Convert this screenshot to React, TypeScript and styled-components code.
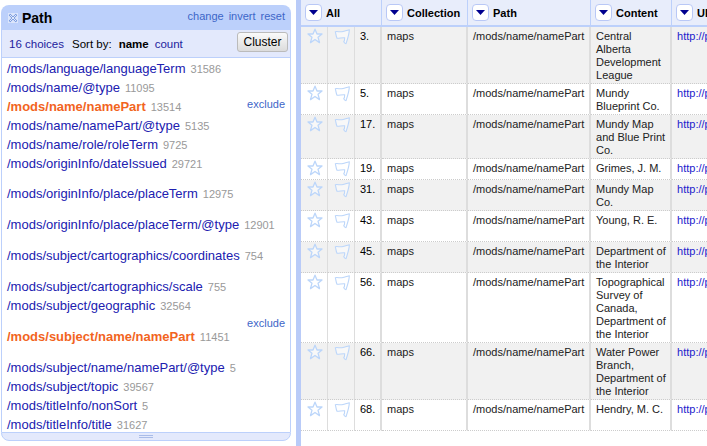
import React from "react";
import styled, { createGlobalStyle } from "styled-components";

const Global = createGlobalStyle`
  html, body { margin: 0; padding: 0; background: #fff; overflow: hidden; }
  body { font-family: "Liberation Sans", Arial, sans-serif; font-size: 12px; color: #000; }
`;

const Page = styled.div`
  display: flex;
  width: 707px;
  height: 446px;
  overflow: hidden;
`;
const Side = styled.aside`
  width: 296px;
  flex: none;
  box-sizing: border-box;
  padding: 5px 5px 5px 1px;
`;
const Panel = styled.section`
  height: 100%;
  display: flex;
  flex-direction: column;
`;
const PanelHead = styled.header`
  height: 25px;
  flex: none;
  display: flex;
  align-items: center;
  box-sizing: border-box;
  padding: 0 6px 0 7px;
  background: #bcd0fb;
  border-radius: 8px 8px 0 0;
`;
const Title = styled.span`
  font-size: 14px;
  font-weight: bold;
  margin-left: 4px;
  flex: 1;
`;
const HeadLinks = styled.div`
  display: flex;
  gap: 5px;
  margin-top: -3px;
`;
const BlueLink = styled.a`
  color: #3d66c8;
  font-size: 11px;
`;
const SubHead = styled.div`
  height: 28px;
  flex: none;
  box-sizing: border-box;
  display: flex;
  align-items: center;
  padding: 0 2px 0 7px;
  font-size: 11.5px;
  background: #e3e9fc;
  border-bottom: 1px solid #bcd0fb;
  border-left: 1px solid #bcd0fb;
  border-right: 1px solid #bcd0fb;
`;
const Choices = styled.a`
  color: #22229c;
  margin-right: 8px;
`;
const Sort = styled.span<{ $bold?: boolean; $link?: boolean }>`
  margin-right: ${(p) => (p.$bold ? 6 : 7)}px;
  font-weight: ${(p) => (p.$bold ? "bold" : "normal")};
  color: ${(p) => (p.$link ? "#22229c" : "#000")};
`;
const Cluster = styled.button`
  margin-left: auto;
  width: 51px;
  height: 20px;
  margin-top: -4px;
  padding: 0;
  font: 12px "Liberation Sans", Arial, sans-serif;
  color: #000;
  background: linear-gradient(#fafafa, #dcdcdc);
  border: 1px solid #bbb;
  border-radius: 3px;
`;
const List = styled.div`
  flex: 1;
  min-height: 0;
  overflow: hidden;
  box-sizing: border-box;
  padding: 1px 0 0 5px;
  background: #fff;
  border-left: 1px solid #bcd0fb;
  border-right: 1px solid #bcd0fb;
`;
const Item = styled.div<{ $gap?: number }>`
  position: relative;
  height: 19px;
  line-height: 19px;
  margin-top: ${(p) => p.$gap ?? 0}px;
  white-space: nowrap;
`;
const Choice = styled.a<{ $on?: boolean }>`
  font-size: 13px;
  color: ${(p) => (p.$on ? "#f2641e" : "#2020b0")};
  font-weight: ${(p) => (p.$on ? "bold" : "normal")};
`;
const Count = styled.span`
  font-size: 11px;
  color: #999;
  margin-left: 5px;
`;
const Exclude = styled.a<{ $up?: boolean }>`
  position: absolute;
  right: 5px;
  top: ${(p) => (p.$up ? -13 : -2)}px;
  font-size: 11px;
  color: #3d66c8;
`;
const Foot = styled.footer`
  height: 9px;
  flex: none;
  box-sizing: border-box;
  display: flex;
  flex-direction: column;
  align-items: center;
  gap: 1px;
  padding-top: 2px;
  background: #e3e9fc;
  border: 1px solid #bcd0fb;
  border-radius: 0 0 8px 8px;
`;
const Grip = styled.i`
  display: block;
  width: 14px;
  height: 1px;
  background: #a9bce8;
`;
const Splitter = styled.div`
  width: 5px;
  flex: none;
  background: #b9cbf8;
`;
const Main = styled.main`
  flex: 1;
  min-width: 0;
  overflow: hidden;
`;
const Table = styled.table`
  width: 570px;
  table-layout: fixed;
  border-collapse: separate;
  border-spacing: 0;
`;
const HeadCell = styled.th`
  height: 27px;
  box-sizing: border-box;
  padding: 0 0 0 4px;
  background: #e8edfb;
  border-bottom: 2px solid #bcd0fb;
  border-right: 1px solid #bcd0fb;
  text-align: left;
  font-size: 11px;
  font-weight: bold;
`;
const HeadInner = styled.div`
  display: flex;
  align-items: center;
  gap: 4px;
  white-space: nowrap;
  overflow: hidden;
`;
const Drop = styled.span`
  width: 17px;
  height: 17px;
  box-sizing: border-box;
  flex: none;
  display: flex;
  align-items: center;
  justify-content: center;
  background: #fff;
  border: 1px solid #b9c8f6;
  border-radius: 4px;
`;
const Row = styled.tr<{ $h: number; $odd: boolean }>`
  height: ${(p) => p.$h}px;
  background: ${(p) => (p.$odd ? "#f1f1f1" : "#fff")};
`;
const Cell = styled.td<{ $wide?: boolean }>`
  box-sizing: border-box;
  vertical-align: top;
  padding: 3px 4px 1px 5px;
  line-height: 13px;
  font-size: 11px;
  color: #222;
  border-bottom: 1px dotted #ccc;
  border-right: ${(p) => (p.$wide ? 2 : 1)}px solid #ddd;
`;
const IconCell = styled(Cell)`
  padding: 1px 0 0 5px;
`;
const NumCell = styled(Cell)`
  color: #000;
`;
const Url = styled.a`
  color: #2222cc;
  white-space: nowrap;
`;
const Glyph = styled.svg`
  display: block;
  overflow: visible;
`;

const XIcon = () => (
  <Glyph width="10" height="10" viewBox="0 0 10 10" aria-hidden="true">
    <rect width="10" height="10" fill="#dbe5fb" />
    <path d="M1.5 1.5L8.5 8.5M8.5 1.5L1.5 8.5" stroke="#6f93dd" strokeWidth="2" />
    <path d="M2 2L8 8M8 2L2 8" stroke="#fff" strokeWidth="0.8" />
  </Glyph>
);
const Tri = () => (
  <Glyph width="9" height="5" viewBox="0 0 9 5" aria-hidden="true">
    <path d="M0 0H9L4.5 5Z" fill="#00008f" />
  </Glyph>
);
const Star = () => (
  <Glyph width="17" height="16" viewBox="0 0 17 16" aria-hidden="true">
    <path
      d="M9 1.2L11 6H16L12 9.2L13.5 14.6L9 11.5L4.5 14.6L6 9.2L2 6H7Z"
      fill="rgba(255,255,255,.5)"
      stroke="#bcd6fa"
      strokeWidth="1.3"
      strokeLinejoin="round"
    />
  </Glyph>
);
const Flag = () => (
  <Glyph width="18" height="17" viewBox="0 0 18 17" aria-hidden="true">
    <path
      d="M2.3 3.7C5 3 7 4.5 10 3.5C12 3 14 2.2 16.3 1.7C16.3 6 14.5 11 13 15.7C12 15.5 11 14.7 10.7 13.7C11.5 13.2 11.7 11 11.7 9.7C9 9.5 6 10.5 4 10.3C3 8.5 3 6 2.3 3.7Z"
      fill="rgba(255,255,255,.5)"
      stroke="#bcd6fa"
      strokeWidth="1.1"
      strokeLinejoin="round"
    />
  </Glyph>
);

const choices = [
  { t: "/mods/language/languageTerm", c: "31586" },
  { t: "/mods/name/@type", c: "11095" },
  { t: "/mods/name/namePart", c: "13514", on: true },
  { t: "/mods/name/namePart/@type", c: "5135" },
  { t: "/mods/name/role/roleTerm", c: "9725" },
  { t: "/mods/originInfo/dateIssued", c: "29721" },
  { t: "/mods/originInfo/place/placeTerm", c: "12975", gap: 11 },
  { t: "/mods/originInfo/place/placeTerm/@type", c: "12901", gap: 12 },
  { t: "/mods/subject/cartographics/coordinates", c: "754", gap: 12 },
  { t: "/mods/subject/cartographics/scale", c: "755", gap: 12 },
  { t: "/mods/subject/geographic", c: "32564" },
  { t: "/mods/subject/name/namePart", c: "11451", on: true, gap: 12 },
  { t: "/mods/subject/name/namePart/@type", c: "5", gap: 12 },
  { t: "/mods/subject/topic", c: "39567" },
  { t: "/mods/titleInfo/nonSort", c: "5" },
  { t: "/mods/titleInfo/title", c: "31627" },
];

const rows = [
  { n: "3.", h: 57, c: "Central Alberta Development League" },
  { n: "5.", h: 31, c: "Mundy Blueprint Co." },
  { n: "17.", h: 44, c: "Mundy Map and Blue Print Co." },
  { n: "19.", h: 21, c: "Grimes, J. M." },
  { n: "31.", h: 31, c: "Mundy Map Co." },
  { n: "43.", h: 31, c: "Young, R. E." },
  { n: "45.", h: 31, c: "Department of the Interior" },
  { n: "56.", h: 70, c: "Topographical Survey of Canada, Department of the Interior" },
  { n: "66.", h: 57, c: "Water Power Branch, Department of the Interior" },
  { n: "68.", h: 31, c: "Hendry, M. C." },
];

const columns = ["Collection", "Path", "Content", "URL"];

export default function App() {
  return (
    <Page>
      <Global />
      <Side>
        <Panel>
          <PanelHead>
            <XIcon />
            <Title>Path</Title>
            <HeadLinks>
              <BlueLink>change</BlueLink>
              <BlueLink>invert</BlueLink>
              <BlueLink>reset</BlueLink>
            </HeadLinks>
          </PanelHead>
          <SubHead>
            <Choices>16 choices</Choices>
            <Sort>Sort by:</Sort>
            <Sort $bold>name</Sort>
            <Sort $link>count</Sort>
            <Cluster>Cluster</Cluster>
          </SubHead>
          <List>
            {choices.map((x) => (
              <Item key={x.t} $gap={x.gap}>
                <Choice $on={x.on}>{x.t}</Choice>
                <Count>{x.c}</Count>
                {x.on && <Exclude $up={!!x.gap}>exclude</Exclude>}
              </Item>
            ))}
          </List>
          <Foot>
            <Grip />
            <Grip />
          </Foot>
        </Panel>
      </Side>
      <Splitter />
      <Main>
        <Table>
          <colgroup>
            <col style={{ width: 27 }} />
            <col style={{ width: 27 }} />
            <col style={{ width: 27 }} />
            <col style={{ width: 86 }} />
            <col style={{ width: 123 }} />
            <col style={{ width: 81 }} />
            <col style={{ width: 199 }} />
          </colgroup>
          <thead>
            <tr>
              <HeadCell colSpan={3}>
                <HeadInner>
                  <Drop><Tri /></Drop>All
                </HeadInner>
              </HeadCell>
              {columns.map((c) => (
                <HeadCell key={c}>
                  <HeadInner>
                    <Drop><Tri /></Drop>{c}
                  </HeadInner>
                </HeadCell>
              ))}
            </tr>
          </thead>
          <tbody>
            {rows.map((r, i) => (
              <Row key={r.n} $h={r.h} $odd={i % 2 === 0}>
                <IconCell><Star /></IconCell>
                <IconCell><Flag /></IconCell>
                <NumCell $wide>{r.n}</NumCell>
                <Cell $wide>maps</Cell>
                <Cell $wide>/mods/name/namePart</Cell>
                <Cell $wide>{r.c}</Cell>
                <Cell><Url>http://purl.example.org/maps/{r.n}</Url></Cell>
              </Row>
            ))}
          </tbody>
        </Table>
      </Main>
    </Page>
  );
}
